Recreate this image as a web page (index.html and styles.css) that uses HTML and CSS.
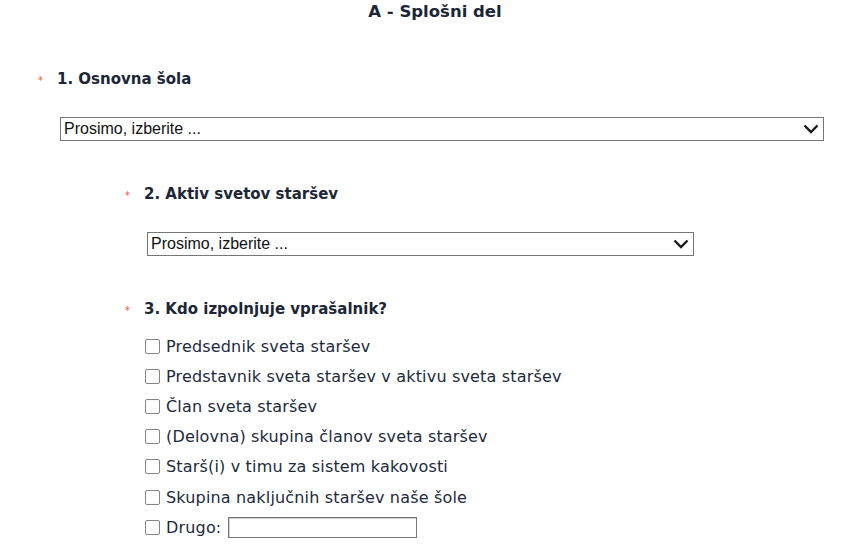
FILE: index.html
```html
<!DOCTYPE html>
<html lang="sl">
<head>
<meta charset="utf-8">
<link rel="stylesheet" href="styles.css">
</head>
<body>
<div class="page">
  <h1 class="title">A - Splošni del</h1>

  <div class="question q1">
    <div class="qhead"><span class="req">*</span><span class="qtext">1. Osnovna šola</span></div>
    <div class="select wide"><span>Prosimo, izberite ...</span><svg class="chev" viewBox="0 0 16 10" width="16" height="10"><path d="M1.5 1.5 L8 8 L14.5 1.5" fill="none" stroke="#1a1a1a" stroke-width="2.4"/></svg></div>

    <div class="question q2">
      <div class="qhead"><span class="req">*</span><span class="qtext">2. Aktiv svetov staršev</span></div>
      <div class="select mid"><span>Prosimo, izberite ...</span><svg class="chev" viewBox="0 0 16 10" width="16" height="10"><path d="M1.5 1.5 L8 8 L14.5 1.5" fill="none" stroke="#1a1a1a" stroke-width="2.4"/></svg></div>
    </div>

    <div class="question q3">
      <div class="qhead"><span class="req">*</span><span class="qtext">3. Kdo izpolnjuje vprašalnik?</span></div>
      <ul class="options">
        <li><span class="box"></span>Predsednik sveta staršev</li>
        <li><span class="box"></span>Predstavnik sveta staršev v aktivu sveta staršev</li>
        <li><span class="box"></span>Član sveta staršev</li>
        <li><span class="box"></span>(Delovna) skupina članov sveta staršev</li>
        <li><span class="box"></span>Starš(i) v timu za sistem kakovosti</li>
        <li><span class="box"></span>Skupina naključnih staršev naše šole</li>
        <li><span class="box"></span>Drugo: <span class="textin"></span></li>
      </ul>
    </div>
  </div>
</div>
</body>
</html>
```

FILE: styles.css
```css
html, body {
  margin: 0;
  padding: 0;
  background: #ffffff;
}
.page {
  width: 866px;
  font-family: "DejaVu Sans", Verdana, sans-serif;
  color: #1c2a3c;
}
.title {
  margin: 0;
  padding-top: 2px;
  text-align: center;
  font-size: 16.5px;
  font-weight: bold;
  line-height: 20px;
  color: #1c2636;
  padding-left: 4px;
}
.q1 {
  padding-left: 37px;
  padding-top: 48px;
}
.qhead {
  display: flex;
  align-items: baseline;
  height: 20px;
}
.req {
  color: #e8552e;
  font-size: 10px;
  width: 19px;
  padding-left: 1px;
}
.qtext {
  font-size: 15px;
  font-weight: bold;
  color: #1c2636;
}
.select {
  box-sizing: border-box;
  display: flex;
  align-items: center;
  justify-content: space-between;
  border: 1px solid #767676;
  height: 24px;
  padding: 0 4px 0 3px;
  font-family: "Liberation Sans", Arial, sans-serif;
  font-size: 16px;
  color: #111;
}
.select.wide {
  width: 764px;
  margin: 27px 0 0 23px;
}
.q2 {
  padding-left: 87px;
  padding-top: 44px;
}
.select.mid {
  width: 547px;
  margin: 27px 0 0 23px;
}
.q3 {
  padding-left: 87px;
  padding-top: 44px;
}
.options {
  list-style: none;
  margin: 11px 0 0 21px;
  padding: 0;
}
.options li {
  display: flex;
  align-items: center;
  height: 30.2px;
  font-size: 16px;
  letter-spacing: 0.17px;
  color: #1c2a3c;
}
.box {
  box-sizing: border-box;
  width: 15px;
  height: 15px;
  border: 1px solid #858585;
  border-radius: 2px;
  margin-right: 6px;
  background: #fff;
}
.textin {
  display: inline-block;
  box-sizing: border-box;
  width: 189px;
  height: 21px;
  border: 1px solid #767676;
  box-shadow: inset 1px 1px 0 #d0d0d0;
  margin-left: 7px;
}
```
